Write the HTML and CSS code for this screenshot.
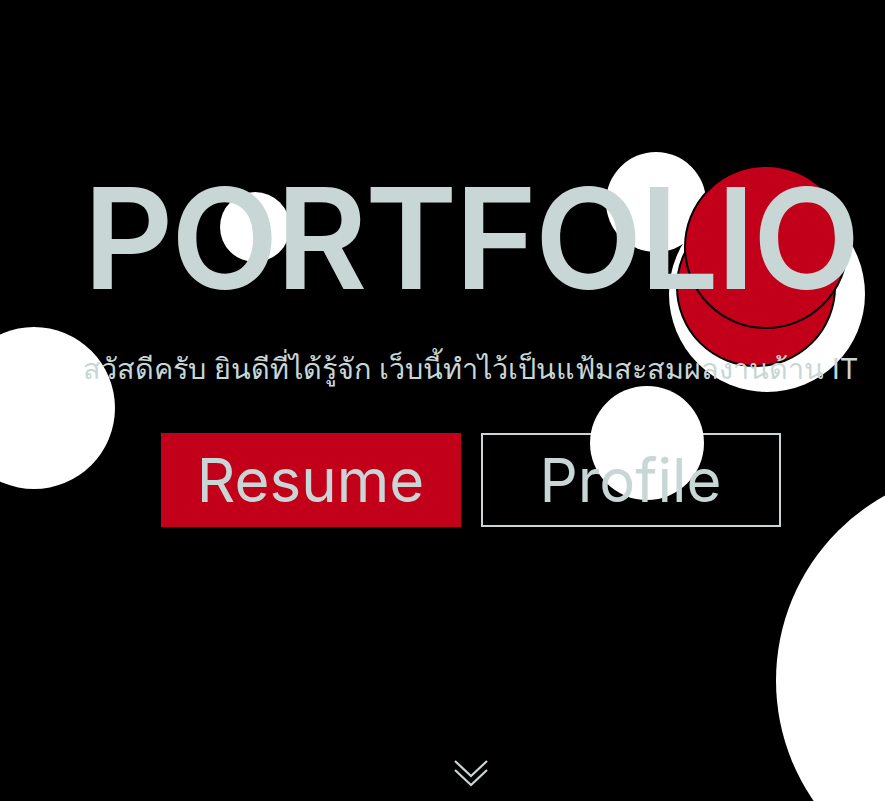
FILE: index.html
```html
<!DOCTYPE html>
<html lang="th">
<head>
<meta charset="utf-8">
<title>Portfolio</title>
<link rel="stylesheet" href="styles.css">
</head>
<body>
<section class="hero">
  <div class="bubbles" aria-hidden="true">
    <span class="bubble b-left"></span>
    <span class="bubble b-small"></span>
    <span class="bubble b-top"></span>
    <span class="bubble b-big-back"></span>
    <span class="bubble red r-low"></span>
    <span class="bubble red r-high"></span>
    <span class="bubble b-mid"></span>
    <span class="bubble b-corner"></span>
  </div>
  <h1 class="title">PORTFOLIO</h1>
  <p class="subtitle">สวัสดีครับ ยินดีที่ได้รู้จัก เว็บนี้ทำไว้เป็นแฟ้มสะสมผลงานด้าน IT</p>
  <div class="actions">
    <a class="btn btn-solid" href="#resume"><span class="btn-label">Resume</span></a>
    <a class="btn btn-outline" href="#profile"><span class="btn-label">Profile</span></a>
  </div>
  <a class="scroll-down" href="#next" aria-label="scroll down">
    <svg width="36" height="30" viewBox="0 0 36 30" fill="none" stroke="#c8d6d6" stroke-width="2.2">
      <polyline points="2,3 18,18 34,3"/>
      <polyline points="2,12 18,27 34,12"/>
    </svg>
  </a>
</section>
</body>
</html>
```
FILE: styles.css
```css
* { box-sizing: border-box; }
html, body { margin: 0; padding: 0; }
body {
  background: #000;
  font-family: "Inter", "Noto Sans", "DejaVu Sans", sans-serif;
  color: #c8d6d6;
}
.hero {
  position: relative;
  height: 801px;
  overflow: hidden;
  display: flex;
  flex-direction: column;
  align-items: center;
  padding: 168px 0 13px 56px;
}
.bubbles { position: absolute; inset: 0; z-index: 1; }
.bubble {
  position: absolute;
  border-radius: 50%;
  background: #fff;
}
.b-left { left: -47px; top: 327px; width: 162px; height: 162px; }
.b-small { left: 220px; top: 192px; width: 70px; height: 70px; }
.b-top { left: 606px; top: 152px; width: 100px; height: 100px; }
.b-big-back { left: 669px; top: 196px; width: 196px; height: 196px; }
.red { background: #c30019; border: 2px solid #000; }
.r-low { left: 676px; top: 207px; width: 160px; height: 160px; }
.r-high { left: 684px; top: 165px; width: 164px; height: 164px; }
.b-mid { left: 590px; top: 386px; width: 114px; height: 114px; }
.b-corner { left: 776px; top: 469px; width: 423px; height: 423px; }

.title, .subtitle, .btn-label, .scroll-down { position: relative; z-index: 2; }
.title {
  margin: 0;
  font-size: 140px;
  line-height: 1;
  font-weight: 600;
  letter-spacing: -2.5px;
  color: #c8d6d6;
}
.subtitle {
  margin: 44px 0 0;
  font-size: 28.8px;
  line-height: 1.2;
  font-weight: 400;
  white-space: nowrap;
}
.actions {
  display: flex;
  gap: 20px;
  margin-top: 46px;
}
.btn {
  width: 300px;
  height: 94px;
  display: flex;
  align-items: center;
  justify-content: center;
  text-decoration: none;
  color: #c8d6d6;
  font-size: 60px;
  font-weight: 400;
}
.btn-solid { background: #c30019; }
.btn-outline { border: 2px solid #c8d6d6; }
.scroll-down {
  margin-top: auto;
  display: block;
  width: 36px;
  height: 30px;
}
.scroll-down svg { display: block; }
```
